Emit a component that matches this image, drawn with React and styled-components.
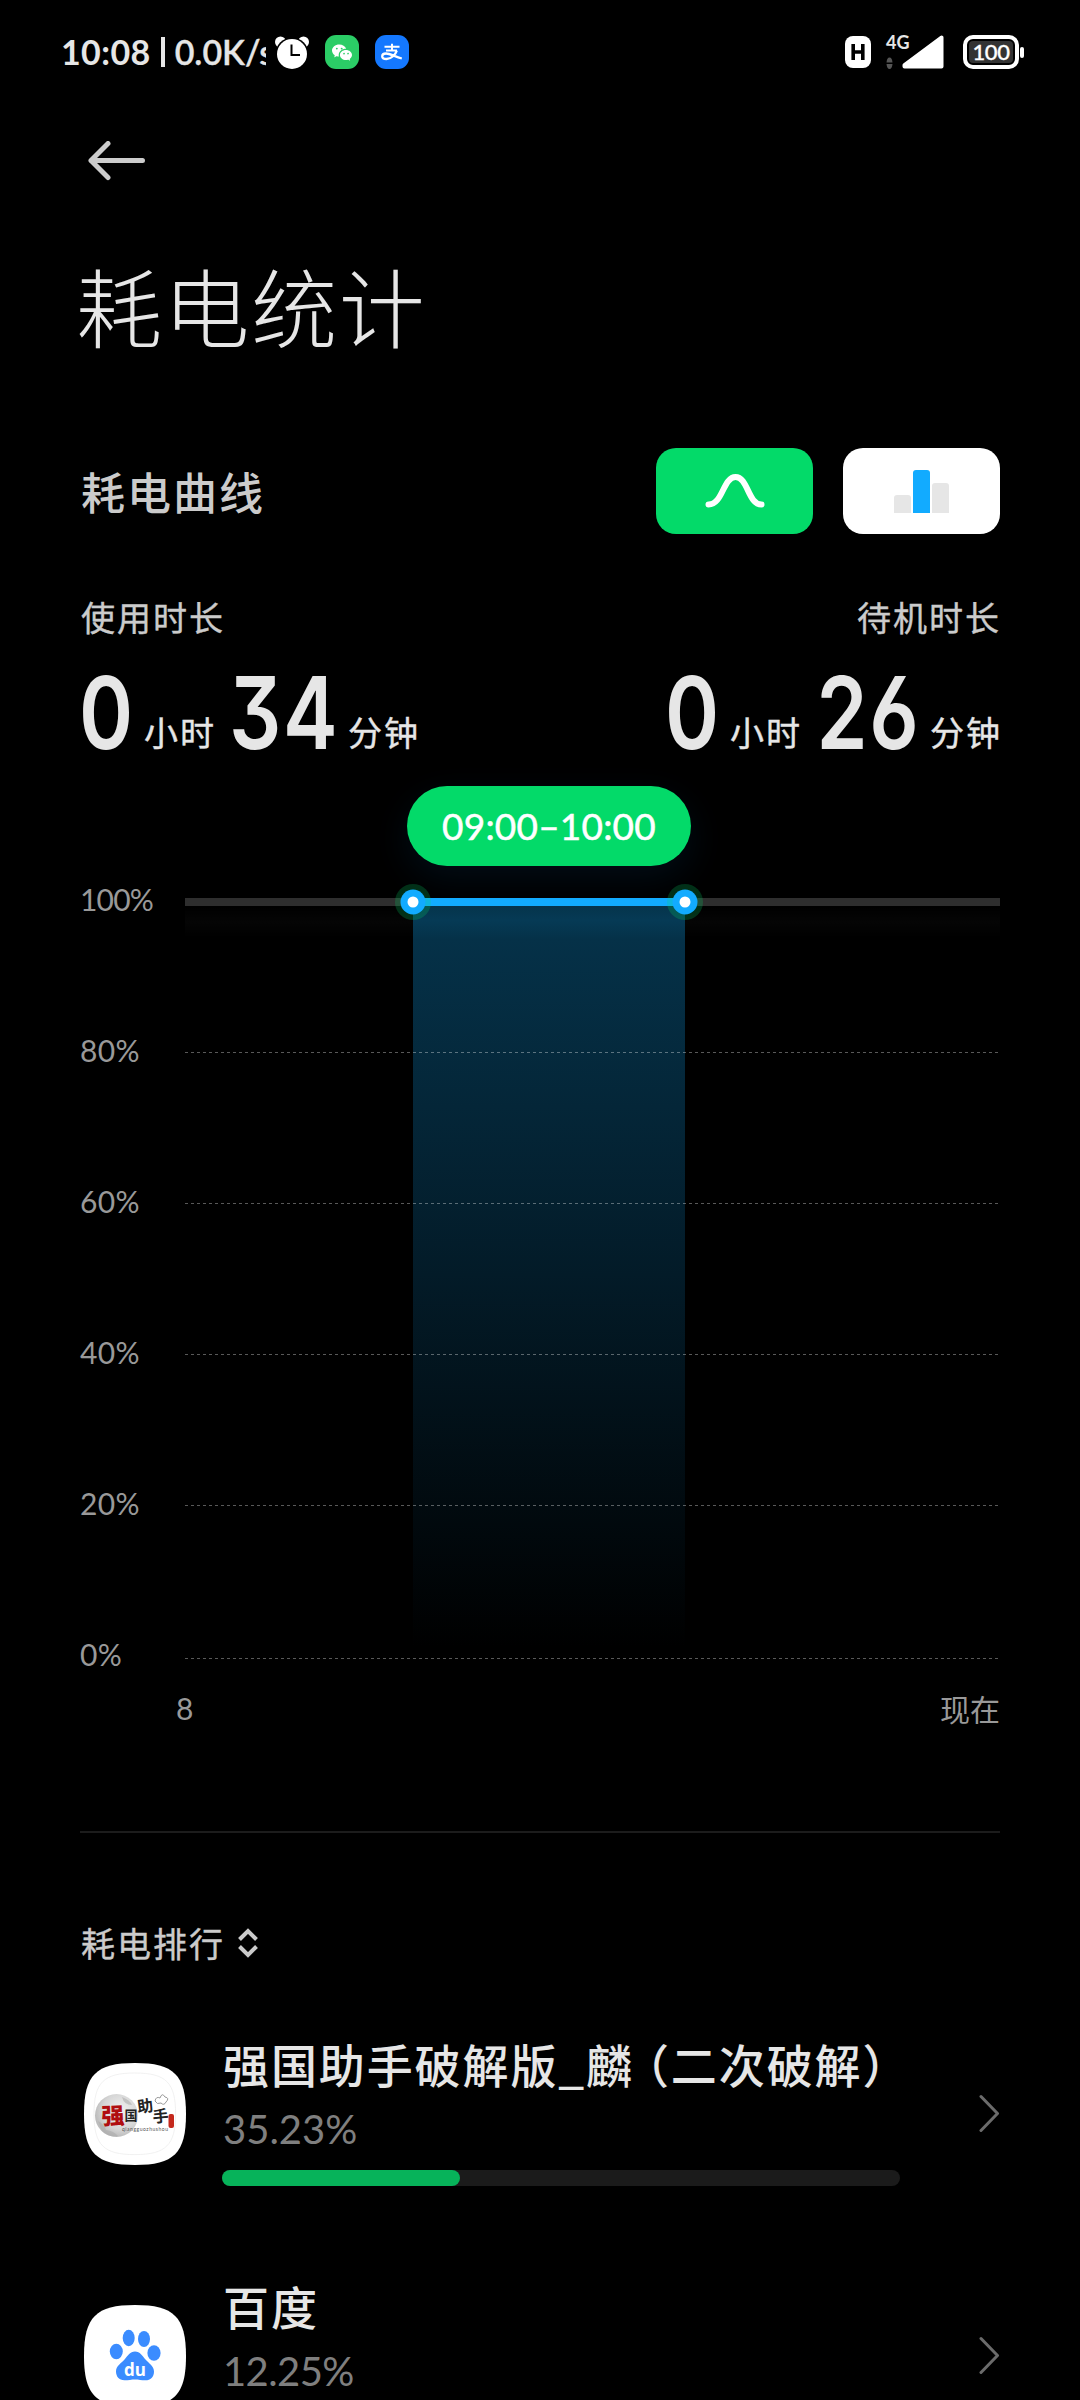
import React from 'react';
import styled, { createGlobalStyle } from 'styled-components';
import { BsWechat } from 'react-icons/bs';

const Global = createGlobalStyle`
  html, body { margin: 0; padding: 0; background: #000; }
  * { box-sizing: border-box; }
`;

const latin = `Lato, 'Noto Sans CJK SC', sans-serif`;
const han = `'Noto Sans CJK SC', sans-serif`;

const Screen = styled.main`
  width: 1080px;
  height: 2400px;
  overflow: hidden;
  background: #000;
  color: #e6e6e6;
  font-family: ${han};
  display: flex;
  flex-direction: column;
`;

const Text = styled.span`
  display: block;
  flex: none;
  white-space: nowrap;
  font-family: ${(p) => (p.$latin ? latin : han)};
  font-size: ${(p) => p.$size}px;
  line-height: ${(p) => p.$line || p.$size}px;
  font-weight: ${(p) => p.$weight || 400};
  letter-spacing: ${(p) => p.$spacing || 0}px;
  color: ${(p) => p.$color || '#e6e6e6'};
  -webkit-text-stroke: ${(p) => p.$stroke || 0}px currentColor;
`;

/* ---------- status bar ---------- */
const StatusBar = styled.header`
  height: 104px;
  padding: 0 56px 0 61px;
  display: flex;
  align-items: center;
  flex: none;
`;
const Clock = styled.div`
  width: 205px;
  height: 50px;
  overflow: hidden;
  display: flex;
  align-items: center;
`;
const ClockBar = styled.i`
  width: 4px;
  height: 30px;
  margin: 0 10px 0 10px;
  background: #e6e6e6;
  flex: none;
`;
const StatusIcons = styled.div`
  display: flex;
  align-items: center;
  gap: 16px;
  margin-left: 9px;
`;
const AppBadge = styled.div`
  width: 34px;
  height: 34px;
  border-radius: 11px;
  background: ${(p) => p.$bg};
  color: #fff;
  display: flex;
  align-items: center;
  justify-content: center;
`;
const StatusRight = styled.div`
  margin-left: auto;
  display: flex;
  align-items: center;
`;
const HdBadge = styled.div`
  width: 26px;
  height: 32px;
  border-radius: 8px;
  background: #fff;
  display: flex;
  align-items: center;
  justify-content: center;
`;
const Network = styled.div`
  width: 24px;
  height: 36px;
  margin-left: 15px;
  display: flex;
  flex-direction: column;
  justify-content: space-between;
`;
const Signal = styled.svg`
  margin-left: -8px;
`;
const Battery = styled.div`
  width: 56px;
  height: 34px;
  margin-left: 19px;
  border: 4px solid #fff;
  border-radius: 10px;
  padding: 2px;
  display: flex;
`;
const BatteryFill = styled.div`
  flex: 1;
  border-radius: 4px;
  background: #333;
  display: flex;
  align-items: center;
  justify-content: center;
`;
const BatteryTip = styled.i`
  width: 4px;
  height: 11px;
  margin-left: 1px;
  border-radius: 2px;
  background: #fff;
`;

/* ---------- header ---------- */
const BackButton = styled.button`
  width: 57px;
  height: 40px;
  margin: 37px 0 0 88px;
  padding: 0;
  border: 0;
  background: none;
  flex: none;
  svg { display: block; }
`;
const PageTitle = styled.h1`
  margin: 74px 0 0 76px;
  height: 106px;
  font-size: 86px;
  line-height: 100px;
  font-weight: 300;
  letter-spacing: 1.6px;
  flex: none;
`;
const Row = styled.div`
  display: flex;
  justify-content: space-between;
  align-items: center;
  flex: none;
`;
const CurveHeader = styled(Row)`
  margin: 87px 80px 0 81px;
  height: 86px;
`;
const Toggle = styled.div`
  display: flex;
  gap: 30px;
`;
const ToggleButton = styled.button`
  width: 157px;
  height: 86px;
  border: 0;
  padding: 0;
  border-radius: 20px;
  background: ${(p) => (p.$active ? '#03da69' : '#fff')};
  display: flex;
  align-items: center;
  justify-content: center;
`;

/* ---------- durations ---------- */
const DurationLabels = styled(Row)`
  margin: 61px 79px 0 81px;
  height: 44px;
`;
const DurationValues = styled(Row)`
  margin: 28px 78px 0 81px;
  height: 90px;
`;
const Duration = styled.div`
  display: flex;
  align-items: flex-end;
  height: 90px;
`;
const Digits = styled.span`
  width: ${(p) => p.$width}px;
  height: 90px;
  display: flex;
  justify-content: center;
  flex: none;
`;
const DigitsInk = styled.span`
  font-family: Inter, sans-serif;
  font-feature-settings: 'cv09' 1, 'cv03' 1;
  font-size: 100px;
  line-height: 91px;
  font-weight: 600;
  letter-spacing: 2px;
  margin-right: 0;
  transform: scaleX(0.82);
`;
const Unit = styled(Text)`
  margin: 0 ${(p) => p.$after || 0}px 3px ${(p) => p.$before}px;
`;

/* ---------- chart ---------- */
const PillRow = styled.div`
  height: 80px;
  margin-top: 29px;
  padding-left: 407px;
  flex: none;
`;
const Pill = styled.div`
  width: 284px;
  height: 80px;
  border-radius: 40px;
  background: #03da69;
  box-shadow: 0 12px 36px rgba(16, 110, 190, 0.12);
  display: flex;
  align-items: center;
  justify-content: center;
`;
const Chart = styled.section`
  display: flex;
  margin: 16px 80px 0 80px;
  height: 808px;
  flex: none;
`;
const YAxis = styled.div`
  width: 105px;
  display: flex;
  flex-direction: column;
`;
const YLabel = styled(Text)`
  height: 151px;
`;
const Plot = styled.svg`
  display: block;
  overflow: visible;
`;
const XAxis = styled(Row)`
  margin: -2px 80px 0 176px;
  height: 40px;
`;
const Divider = styled.hr`
  margin: 103px 80px 0;
  border: 0;
  height: 2px;
  background: #1c1c1c;
  flex: none;
`;

/* ---------- ranking ---------- */
const SortHeader = styled.div`
  margin: 88px 0 0 81px;
  height: 44px;
  display: flex;
  align-items: center;
  gap: 13px;
  flex: none;
`;
const Ranking = styled.section`
  margin-top: 48px;
`;
const AppRow = styled.article`
  height: 242px;
  padding: 0 80px 0 84px;
  display: flex;
  flex: none;
`;
const AppIcon = styled.svg`
  width: 102px;
  height: 102px;
  margin-top: 50px;
  flex: none;
`;
const AppInfo = styled.div`
  width: 678px;
  margin-left: 36px;
  padding-top: 19px;
`;
const Name = styled(Text)`
  margin-left: 1px;
`;
const OpenParen = styled.span`
  margin-left: 12px;
  font-feature-settings: 'halt' 1;
`;
const Percent = styled(Text)`
  margin: 13px 0 0 1px;
`;
const Track = styled.div`
  height: 16px;
  margin-top: 19px;
  border-radius: 8px;
  background: #1b1b1b;
`;
const Fill = styled.div`
  height: 16px;
  width: ${(p) => p.$width}px;
  border-radius: 8px;
  background: #07b35a;
`;
const Chevron = styled.svg`
  margin: 81px 0 0 auto;
  flex: none;
`;

const SQUIRCLE = 'M0 51C0 12 12 0 51 0S102 12 102 51S90 102 51 102S0 90 0 51Z';

function AlarmIcon() {
  return (
    <svg width="34" height="33" viewBox="0 0 34 33">
      <circle cx="5.5" cy="6" r="5.5" fill="#fff" />
      <circle cx="28.5" cy="6" r="5.5" fill="#fff" />
      <circle cx="17" cy="18" r="16.5" fill="#000" />
      <circle cx="17" cy="18" r="15" fill="#fff" />
      <path d="M16.5 8.5V19H25" stroke="#000" strokeWidth="2" fill="none" />
    </svg>
  );
}

function AlipayIcon() {
  return (
    <svg width="34" height="34" viewBox="0 0 34 34" fill="none" stroke="#fff">
      <path d="M9.500 11.800H24.500M17 8.800V15.500M11 15.600H22" strokeWidth="2" />
      <path d="M21.800 15.600C20.500 19.500 16.500 24 11.500 24C9 24 7.200 22.900 7.200 21.200C7.200 19.500 8.900 18.500 11 18.500C15 18.500 19.500 21.500 26.800 23.500" strokeWidth="2.300" />
    </svg>
  );
}

function QiangguoIcon() {
  return (
    <AppIcon viewBox="0 0 102 102">
      <defs>
        <radialGradient id="moon" cx="0.6" cy="0.4" r="0.6">
          <stop offset="0" stopColor="#f2f2f2" />
          <stop offset="0.7" stopColor="#d6d6d6" />
          <stop offset="1" stopColor="#bcbcbc" />
        </radialGradient>
      </defs>
      <path d={SQUIRCLE} fill="#fff" />
      <path d={SQUIRCLE} transform="translate(10 10) scale(.8)" fill="none" stroke="#eee" strokeWidth="1" />
      <circle cx="32.5" cy="52.5" r="21.5" fill="url(#moon)" />
      <path d="M14 58q6 3 8 9q8 1 12 6q-10 2-16-5zM38 34q8 3 10 8q-8 0-10-8z" fill="#a9a9a9" opacity=".55" />
      <path d="M71 38q1-5 5-3q2-6 5-1q5 1 1 5q-2 4-5 1q-4 2-6-2" fill="none" stroke="#999" strokeWidth="1" />
      <text x="17.500" y="61" fontFamily={han} fontWeight="900" fontSize="23" fill="#b00d10" transform="rotate(-2 29 52)">强</text>
      <text x="40.500" y="57" fontFamily={han} fontWeight="700" fontSize="13" fill="#222">国</text>
      <text x="53" y="49" fontFamily={han} fontWeight="700" fontSize="16" fill="#222" transform="rotate(-8 61 43)">助</text>
      <text x="68.500" y="59" fontFamily={han} fontWeight="700" fontSize="16" fill="#222" transform="rotate(-6 76 53)">手</text>
      <text x="38" y="67.500" fontFamily="Lato" fontSize="5" fill="#555" textLength="46">qiangguozhushou</text>
      <rect x="84.500" y="51" width="5.500" height="14" rx="2" fill="#c4281c" />
    </AppIcon>
  );
}

function BaiduIcon() {
  return (
    <AppIcon viewBox="0 0 102 102">
      <path d={SQUIRCLE} fill="#fff" />
      <g fill="#3b8cff">
        <ellipse cx="32.300" cy="46.500" rx="6.500" ry="7.800" />
        <ellipse cx="44.700" cy="33" rx="6" ry="8.200" />
        <ellipse cx="60" cy="34" rx="6" ry="8" />
        <ellipse cx="70" cy="48" rx="6.600" ry="7.800" />
        <path d="M51 46.500c5 0 7.500 4.500 10.500 8s8.500 6.500 8.500 12c0 5.500-3.500 8.800-8.500 8.800c-4 0-7-.8-10.500-.8s-6.500.8-10.500.8c-5.500 0-8.500-3.800-8.500-9c0-5.300 5-7.800 8.500-11.800s5.500-8 10.500-8z" />
      </g>
      <text x="51" y="71" textAnchor="middle" fontFamily="'Open Sans'" fontWeight="700" fontSize="17" fill="#fff">du</text>
    </AppIcon>
  );
}

function Arrow() {
  return (
    <Chevron width="21" height="40" viewBox="0 0 21 40" fill="none" stroke="#6b6b6b" strokeWidth="3" strokeLinecap="round" strokeLinejoin="round">
      <path d="M2 2.500L18.500 19.500L2 36.500" />
    </Chevron>
  );
}

function DurationValue({ hours, minutes, minutesWidth }) {
  return (
    <Duration>
      <Digits $width={52}><DigitsInk>{hours}</DigitsInk></Digits>
      <Unit $size={34} $line={44} $spacing={2} $before={11} $after={16} $stroke={0.4}>小时</Unit>
      <Digits $width={minutesWidth}><DigitsInk>{minutes}</DigitsInk></Digits>
      <Unit $size={34} $line={44} $before={12} $spacing={2} $stroke={0.4}>分钟</Unit>
    </Duration>
  );
}

const gridLines = [151, 302, 453, 604, 757];

export default function App() {
  return (
    <Screen>
      <Global />
      <StatusBar>
        <Clock>
          <Text $latin $size={34} $weight={700} $line={50} $spacing={0.4}>10:08</Text>
          <ClockBar />
          <Text $latin $size={34} $weight={600} $line={50} $stroke={0.3}>0.0K/s</Text>
        </Clock>
        <StatusIcons>
          <AlarmIcon />
          <AppBadge $bg="#2bcd66"><BsWechat size={20} /></AppBadge>
          <AppBadge $bg="#1478ff"><AlipayIcon /></AppBadge>
        </StatusIcons>
        <StatusRight>
          <HdBadge>
            <svg width="14" height="16" viewBox="0 0 14 16" fill="none" stroke="#000" strokeWidth="3.600">
              <path d="M2.200 0V16M11.800 0V16M2 8H12" />
            </svg>
          </HdBadge>
          <Network>
            <Text $latin $size={18} $weight={700} $line={16}>4G</Text>
            <svg width="7" height="13" viewBox="0 0 7 13" fill="#555">
              <path d="M.5 5.500Q1 .5 3.500 .5T6.500 5.500ZM.5 7Q1 12 3.500 12T6.500 7Z" />
            </svg>
          </Network>
          <Signal width="42" height="34" viewBox="0 0 42 34">
            <path d="M2.500 30L39.500 2.500V31.500H2.500Z" fill="#fff" stroke="#fff" strokeWidth="4" strokeLinejoin="round" />
          </Signal>
          <Battery>
            <BatteryFill><Text $latin $size={22} $weight={500} $line={24} $spacing={-0.5} $color="#fff" $stroke={0.3}>100</Text></BatteryFill>
          </Battery>
          <BatteryTip />
        </StatusRight>
      </StatusBar>

      <BackButton aria-label="返回">
        <svg width="57" height="40" viewBox="0 0 57 40" fill="none" stroke="#ccc" strokeWidth="5" strokeLinecap="round" strokeLinejoin="round">
          <path d="M54.500 19.500H3M20 2.500L3 19.500L20 36.500" />
        </svg>
      </BackButton>
      <PageTitle>耗电统计</PageTitle>

      <CurveHeader>
        <Text $size={44} $line={64} $spacing={2} $color="#cbcbcb" $weight={500}>耗电曲线</Text>
        <Toggle>
          <ToggleButton $active>
            <svg width="60" height="36" viewBox="0 0 60 36" fill="none" stroke="#fff" strokeWidth="6" strokeLinecap="round">
              <path d="M3.500 31.500C18 31.500 18 4 30.500 4S43 31.500 56.500 31.500" />
            </svg>
          </ToggleButton>
          <ToggleButton>
            <svg width="55" height="43" viewBox="0 0 55 43">
              <path d="M0 43V28q0-3 3-3h11q3 0 3 3v15z" fill="#e6e6e6" />
              <path d="M19 43V3q0-3 3-3h11q3 0 3 3v40z" fill="#12abff" />
              <path d="M38 43V16q0-3 3-3h11q3 0 3 3v27z" fill="#e6e6e6" />
            </svg>
          </ToggleButton>
        </Toggle>
      </CurveHeader>

      <DurationLabels>
        <Text $size={34} $line={44} $spacing={2} $color="#cbcbcb" $stroke={0.4}>使用时长</Text>
        <Text $size={34} $line={44} $spacing={2} $color="#cbcbcb" $stroke={0.4}>待机时长</Text>
      </DurationLabels>
      <DurationValues>
        <DurationValue hours="0" minutes="34" minutesWidth={104} />
        <DurationValue hours="0" minutes="26" minutesWidth={100} />
      </DurationValues>

      <PillRow>
        <Pill>
          <Text $latin $size={37} $line={80} $weight={400} $spacing={0.2} $color="#fff" $stroke={0.5}>09:00–10:00</Text>
        </Pill>
      </PillRow>

      <Chart>
        <YAxis>
          {['100%', '80%', '60%', '40%', '20%', '0%'].map((t) => (
            <YLabel key={t} $latin $size={30} $line={34} $color="#999" $spacing={t.length > 3 ? -0.8 : 0.3}>{t}</YLabel>
          ))}
        </YAxis>
        <Plot width="815" height="808" viewBox="0 -20 815 808">
          <defs>
            <linearGradient id="area" x1="0" y1="0" x2="0" y2="1">
              <stop offset="0" stopColor="#053349" />
              <stop offset="0.025" stopColor="#063a55" />
              <stop offset="0.05" stopColor="#053148" />
              <stop offset="0.5" stopColor="#031b28" />
              <stop offset="1" stopColor="#000000" />
            </linearGradient>
            <linearGradient id="shade" x1="0" y1="0" x2="0" y2="1">
              <stop offset="0" stopColor="#fff" stopOpacity="0" />
              <stop offset="0.5" stopColor="#fff" stopOpacity="0.02" />
              <stop offset="1" stopColor="#fff" stopOpacity="0" />
            </linearGradient>
          </defs>
          <rect x="0" y="4" width="815" height="32" fill="url(#shade)" />
          <rect x="228" y="0" width="272" height="745" fill="url(#area)" />
          {gridLines.map((y) => (
            <line key={y} x1="0" x2="815" y1={y - 0.5} y2={y - 0.5} stroke="#fff" strokeOpacity="0.35" strokeWidth="1" strokeDasharray="3 3" />
          ))}
          <rect x="0" y="-4" width="815" height="8" fill="#2e2e2e" />
          <rect x="228" y="-4" width="272" height="8" fill="#12abff" />
          {[228, 500].map((x) => (
            <g key={x}>
              <circle cx={x} cy="0" r="18" fill="#03da69" fillOpacity="0.22" />
              <circle cx={x} cy="0" r="12.500" fill="#12abff" />
              <circle cx={x} cy="0" r="5.500" fill="#fff" />
            </g>
          ))}
        </Plot>
      </Chart>
      <XAxis>
        <Text $latin $size={30} $line={40} $color="#999">8</Text>
        <Text $size={30} $line={38} $color="#999">现在</Text>
      </XAxis>

      <Divider />

      <SortHeader>
        <Text $size={34} $line={44} $spacing={2} $color="#cbcbcb" $stroke={0.4}>耗电排行</Text>
        <svg width="20" height="30" viewBox="0 0 20 30" fill="none" stroke="#cbcbcb" strokeWidth="4">
          <path d="M1.500 11.500L10 3L18.500 11.500M1.500 18.500L10 27L18.500 18.500" />
        </svg>
      </SortHeader>

      <Ranking>
        <AppRow>
          <QiangguoIcon />
          <AppInfo>
            <Name $size={46} $line={62} $spacing={1.9} $weight={500}>强国助手破解版_麟<OpenParen>（</OpenParen>二次破解）</Name>
            <Percent $latin $size={40} $line={44} $color="#7f7f7f">35.23%</Percent>
            <Track><Fill $width={238} /></Track>
          </AppInfo>
          <Arrow />
        </AppRow>
        <AppRow>
          <BaiduIcon />
          <AppInfo>
            <Name $size={46} $line={62} $spacing={1.9} $weight={500}>百度</Name>
            <Percent $latin $size={40} $line={44} $color="#7f7f7f" $spacing={-0.6}>12.25%</Percent>
            <Track><Fill $width={83} /></Track>
          </AppInfo>
          <Arrow />
        </AppRow>
      </Ranking>
    </Screen>
  );
}
